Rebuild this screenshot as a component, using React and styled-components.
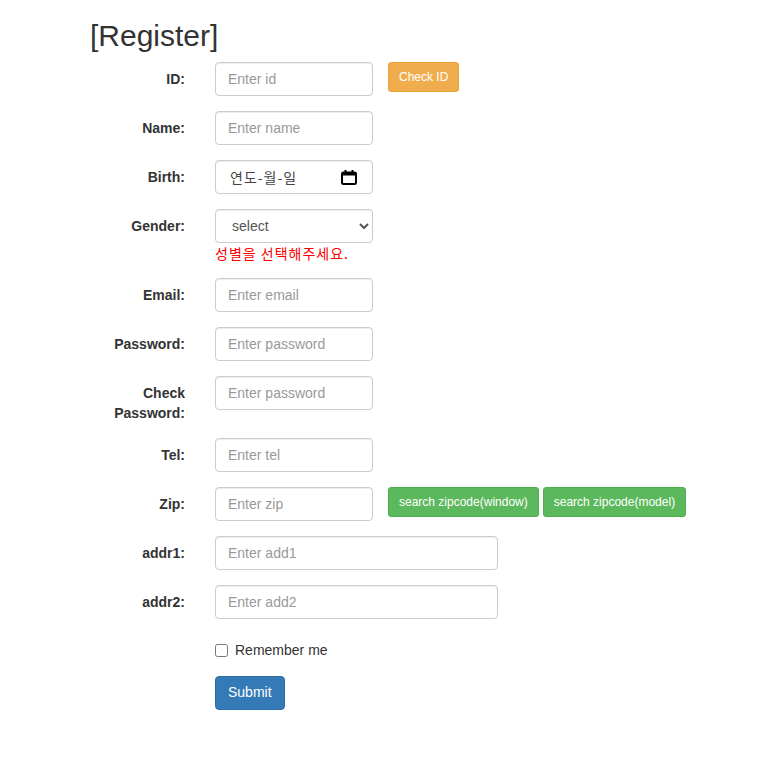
import React from "react";
import styled, { createGlobalStyle } from "styled-components";

const GlobalStyle = createGlobalStyle`
  * { box-sizing: border-box; }
  body {
    margin: 0;
    background: #fff;
    color: #333;
    font-family: "Liberation Sans", Arial, "Noto Sans CJK KR", sans-serif;
    font-size: 14px;
    line-height: 1.42857;
  }
`;

const Wrapper = styled.div`
  width: 750px;
  padding-left: 75px;
`;

const Title = styled.h2`
  margin: 19px 0 10px;
  padding: 0 15px;
  font-size: 30px;
  font-weight: 500;
  line-height: 1.1;
`;

const Row = styled.div`
  display: flex;
  align-items: flex-start;
  margin-bottom: 15px;
`;

const Label = styled.label`
  flex: 0 0 125px;
  padding: 8px 15px 0;
  margin-bottom: -1px;
  text-align: right;
  font-weight: bold;
`;

const Col = styled.div`
  flex: 0 0 ${(p) => p.$w}px;
  padding: 0 15px;
  margin-left: ${(p) => (p.$offset ? 125 : 0)}px;
`;

const ButtonCol = styled.div`
  display: flex;
  gap: 4px;
`;

const Input = styled.input`
  display: block;
  width: 100%;
  height: 34px;
  padding: 6px 12px;
  font-family: inherit;
  font-size: 14px;
  line-height: 1.42857;
  color: #555;
  background: #fff;
  border: 1px solid #ccc;
  border-radius: 4px;
  box-shadow: inset 0 1px 1px rgba(0, 0, 0, 0.075);
  outline: none;
  &::placeholder { color: #999; }
`;

const Select = styled.select`
  display: block;
  width: 100%;
  height: 34px;
  padding: 6px 8px 6px 12px;
  font-family: inherit;
  font-size: 14px;
  color: #555;
  background: #fff;
  border: 1px solid #ccc;
  border-radius: 4px;
  box-shadow: inset 0 1px 1px rgba(0, 0, 0, 0.075);
`;

const DateBox = styled.div`
  position: relative;
`;

const DateText = styled(Input)`
  font-family: "Noto Sans CJK KR", sans-serif;
  font-size: 14px;
  letter-spacing: 1px;
  color: #444;
  padding-left: 14px;
  cursor: default;
`;

const CalendarIcon = styled.svg`
  position: absolute;
  right: 16px;
  top: 10px;
  pointer-events: none;
`;

const ErrorText = styled.span`
  display: block;
  color: #ff0000;
  font-family: "Noto Sans CJK KR", sans-serif;
  font-size: 14px;
  letter-spacing: 1px;
  line-height: 20px;
`;

const Button = styled.button`
  display: inline-block;
  padding: ${(p) => (p.$small ? "5px 10px" : "6px 12px")};
  font-family: inherit;
  font-size: ${(p) => (p.$small ? 12 : 14)}px;
  line-height: ${(p) => (p.$small ? 1.5 : 1.42857)};
  border-radius: ${(p) => (p.$small ? 3 : 4)}px;
  color: #fff;
  background: ${(p) => p.$bg};
  border: 1px solid ${(p) => p.$border};
  cursor: pointer;
  white-space: nowrap;
`;

const CheckLabel = styled.label`
  display: flex;
  align-items: center;
  gap: 7px;
  padding-top: 7px;
  min-height: 27px;
  input {
    margin: 0;
    width: 13px;
    height: 13px;
  }
`;

const colors = {
  warning: ["#f0ad4e", "#eea236"],
  success: ["#5cb85c", "#4cae4c"],
  primary: ["#337ab7", "#2e6da4"],
};

const Field = ({ label, type = "text", placeholder, wide }) => (
  <Row>
    <Label>{label}</Label>
    <Col $w={wide ? 313 : 188}>
      <Input type={type} placeholder={placeholder} />
    </Col>
  </Row>
);

export default function App() {
  return (
    <>
      <GlobalStyle />
      <Wrapper>
        <Title>[Register]</Title>
        <form onSubmit={(e) => e.preventDefault()}>
          <Row>
            <Label>ID:</Label>
            <Col $w={188}>
              <Input placeholder="Enter id" />
            </Col>
            <ButtonCol>
              <Button type="button" $small $bg={colors.warning[0]} $border={colors.warning[1]}>
                Check ID
              </Button>
            </ButtonCol>
          </Row>
          <Field label="Name:" placeholder="Enter name" />
          <Row>
            <Label>Birth:</Label>
            <Col $w={188}>
              <DateBox>
                <DateText readOnly value="연도-월-일" />
                <CalendarIcon width="16" height="15" viewBox="0 0 16 15">
                  <rect x="1" y="2.5" width="14" height="11.5" rx="1.5" fill="none" stroke="#000" strokeWidth="2" />
                  <rect x="1" y="2.5" width="14" height="3" fill="#000" />
                  <rect x="3.5" y="0" width="2" height="3" fill="#000" />
                  <rect x="10.5" y="0" width="2" height="3" fill="#000" />
                </CalendarIcon>
              </DateBox>
            </Col>
          </Row>
          <Row>
            <Label>Gender:</Label>
            <Col $w={188}>
              <Select defaultValue="">
                <option value="">select</option>
                <option value="M">male</option>
                <option value="F">female</option>
              </Select>
              <ErrorText>성별을 선택해주세요.</ErrorText>
            </Col>
          </Row>
          <Field label="Email:" type="email" placeholder="Enter email" />
          <Field label="Password:" type="password" placeholder="Enter password" />
          <Field label="Check Password:" type="password" placeholder="Enter password" />
          <Field label="Tel:" placeholder="Enter tel" />
          <Row>
            <Label>Zip:</Label>
            <Col $w={188}>
              <Input placeholder="Enter zip" />
            </Col>
            <ButtonCol>
              <Button type="button" $small $bg={colors.success[0]} $border={colors.success[1]}>
                search zipcode(window)
              </Button>
              <Button type="button" $small $bg={colors.success[0]} $border={colors.success[1]}>
                search zipcode(model)
              </Button>
            </ButtonCol>
          </Row>
          <Field label="addr1:" placeholder="Enter add1" wide />
          <Field label="addr2:" placeholder="Enter add2" wide />
          <Row>
            <Col $w={500} $offset>
              <CheckLabel>
                <input type="checkbox" />
                Remember me
              </CheckLabel>
            </Col>
          </Row>
          <Row>
            <Col $w={500} $offset>
              <Button type="submit" $bg={colors.primary[0]} $border={colors.primary[1]}>
                Submit
              </Button>
            </Col>
          </Row>
        </form>
      </Wrapper>
    </>
  );
}
